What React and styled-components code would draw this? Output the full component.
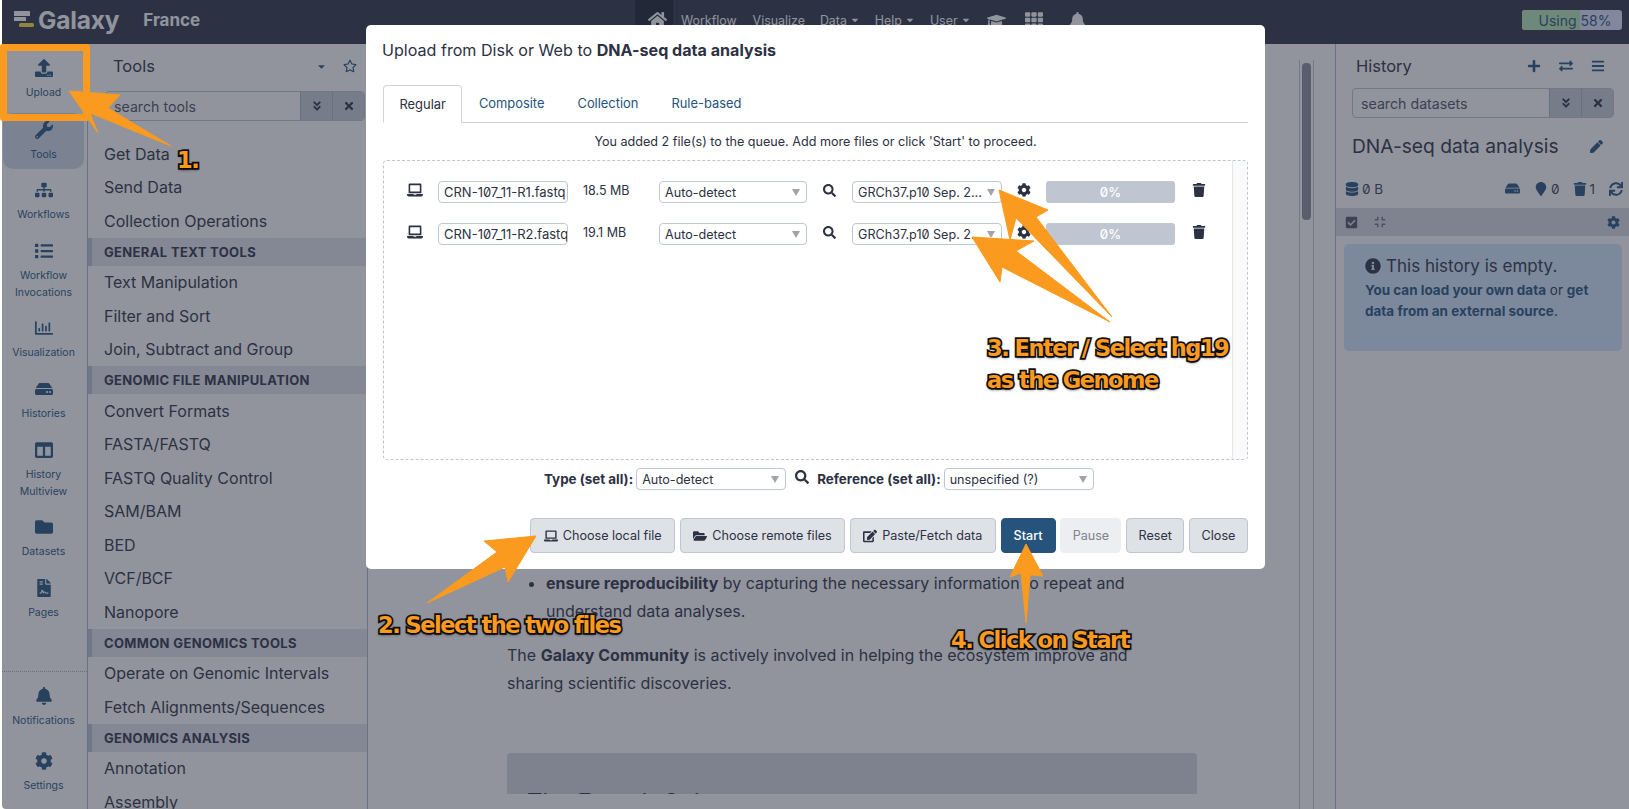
import React from 'react';
import styled, { createGlobalStyle } from 'styled-components';
import {
  FaUpload, FaWrench, FaSitemap, FaList, FaRegChartBar, FaHdd, FaColumns, FaFolder, FaFileContract,
  FaBell, FaCog, FaHome, FaGraduationCap, FaTh, FaRegStar, FaAngleDoubleDown, FaTimes, FaPlus,
  FaExchangeAlt, FaBars, FaPen, FaDatabase, FaMapMarker, FaTrash, FaSync, FaCheckSquare, FaCompress,
  FaInfoCircle, FaLaptop, FaSearch, FaFolderOpen, FaEdit, FaCaretDown,
} from 'react-icons/fa';

const Global = createGlobalStyle`
  html, body { margin: 0; padding: 0; background: #fff; overflow: hidden; }
  body { font-family: Inter, "Noto Sans", "Liberation Sans", sans-serif; font-feature-settings: "zero"; color: #2c3143; }
  * { box-sizing: border-box; }
`;

const Page = styled.div`
  position: relative; width: 1629px; height: 809px; overflow: hidden; background: #fff;
`;
const Shell = styled.div`
  margin-left: 2px; width: 1627px; height: 809px; display: flex; flex-direction: column;
  border-bottom-left-radius: 4px; overflow: hidden; background: #fff; position: relative;
`;

/* ---------- navbar ---------- */
const Navbar = styled.header`
  flex: 0 0 44px; background: #2c3143; display: flex; align-items: stretch; color: #fff; padding-left: 12px;
`;
const Brand = styled.div`display: flex; align-items: flex-start; width: 621px; padding-top: 7px;`;
const LogoMark = styled.svg`width: 21px; height: 20px; margin: 3px 3px 0 0;`;
const BrandName = styled.span`font: 700 24.5px/26px Inter, sans-serif; color: #fff; letter-spacing: -0.2px;`;
const BrandSub = styled.span`font: 700 17px/26px Inter, sans-serif; color: #fff; margin-left: 24px;`;
const HomeTab = styled.div`
  width: 38px; background: #1a1e2d; display: flex; align-items: center; justify-content: center; font-size: 19px; color: #fff; padding: 0 0 6px 6px;
`;
const NavLink = styled.span`
  display: flex; align-items: center; font-size: 12.4px; color: #fff; margin-left: ${p => p.$ml || 16}px; gap: 3px; padding-bottom: 4px;
`;
const NavIcon = styled.span`
  display: flex; align-items: center; font-size: ${p => p.$size || 18}px; color: #fff; margin-left: ${p => p.$ml || 16}px; padding-bottom: 4px;
`;
const Quota = styled.div`
  position: relative; margin: 10px 7px 0 auto; width: 100px; height: 20px; border-radius: 3px; background: #dfe3ff; overflow: hidden;
  display: flex; align-items: center; justify-content: center; font-size: 14px; color: #25537b; padding-left: 6px;
`;
const QuotaFill = styled.div`position: absolute; left: 0; top: 0; bottom: 0; background: #b7e8b6;`;
const QuotaText = styled.span`position: relative;`;

/* ---------- main ---------- */
const Main = styled.div`flex: 1; display: flex; min-height: 0;`;

const Activity = styled.nav`
  flex: 0 0 86px; border-right: 1px solid #b4b8c4; display: flex; flex-direction: column; align-items: stretch; padding-bottom: 11px;
`;
const ActivityItem = styled.div`
  height: ${p => p.$h || 54}px; flex: none; margin: ${p => p.$mt ?? 7}px 3px 0 1px; border-radius: 10px; background: ${p => p.$active ? '#d1d9e9' : 'transparent'};
  display: flex; flex-direction: column; align-items: center; color: #25537b; padding-top: 8px;
  svg { font-size: 18px; flex: none; }
`;
const ActivityLabel = styled.span`
  font-size: 10.5px; line-height: 16.5px; text-align: center; margin-top: 8px; color: #25537b;
`;
const ActivitySpacer = styled.div`flex: 1;`;
const DottedRule = styled.div`border-top: 1px dotted #aeb2bb;`;

const ToolPanel = styled.aside`
  flex: 0 0 280px; display: flex; flex-direction: column; border-right: 1px solid #b4b8c4; overflow: hidden;
`;
const PanelHead = styled.div`
  height: 44px; display: flex; align-items: center; padding: 0 ${p => p.$pr || 10}px 0 ${p => p.$pl || 25}px; font-size: 16.5px; flex: none;
`;
const PanelTitle = styled.span`flex: 1;`;
const HeadIcon = styled.span`
  display: flex; color: #25537b; font-size: ${p => p.$size || 14}px; margin-left: ${p => p.$ml || 18}px;
`;
const SearchGroup = styled.div`
  flex: none; display: flex; height: 30px; margin: ${p => p.$m}; border: 1px solid #bfc5d1; border-radius: 4px; overflow: hidden;
`;
const SearchText = styled.div`
  flex: 1; display: flex; align-items: center; font-size: 14.2px; padding-left: 8px; color: #4c5163;
`;
const SearchButton = styled.div`
  width: 32px; display: flex; align-items: center; justify-content: center; background: #c8cdd9; border-left: 1px solid #aeb3c1; font-size: 12px; color: #2c3143;
`;
const ToolList = styled.div`flex: 1; padding-top: 16px;`;
const ToolRow = styled.div`
  height: 33.5px; display: flex; align-items: center; padding-left: 16px; font-size: 16px; color: #2c3143;
`;
const ToolSection = styled.div`
  height: 28px; display: flex; align-items: center; padding-left: 12px; border-left: 4px solid #b8c2d8; background: #e3e4ec;
  font-weight: 700; font-size: 13px; color: #2c3143; letter-spacing: 0.35px; text-transform: uppercase;
`;

const Center = styled.main`
  flex: 1; min-width: 0; display: flex; align-items: flex-start; border-right: 1px solid #b4b8c4;
`;
const Article = styled.div`
  flex: 1; height: 750px; padding: 525px 0 0 139px; font-size: 16px; line-height: 28px; overflow: hidden; color: #2c3143;
`;
const ArticleList = styled.ul`margin: 0 0 16px; padding: 0 0 0 39px; width: 660px;`;
const ArticlePara = styled.p`margin: 0; width: 660px;`;
const FrenchBox = styled.div`
  margin-top: 56px; width: 690px; height: 80px; border-radius: 4px 4px 0 0; background: #d8dae0; padding: 35px 20px 0; font-size: 24px; line-height: 30px; color: #2c3143;
`;
const ScrollTrack = styled.div`
  flex: 0 0 15px; margin: 16px 21px 0 0; border-left: 1px solid #c6c8d0; border-right: 1px solid #c6c8d0; padding: 3px 2px; height: 749px;
`;
const ScrollThumb = styled.div`height: 157px; background: #5a5d6c; border-radius: 4px; opacity: .7; width: 9px;`;

const History = styled.aside`flex: 0 0 293px; display: flex; flex-direction: column; min-width: 0;`;
const HistoryTitleRow = styled.div`
  display: flex; align-items: center; justify-content: space-between; padding: 4px 26px 0 16px; height: 52px; font-size: 19.2px; flex: none; white-space: nowrap;
`;
const StatRow = styled.div`
  display: flex; align-items: center; padding: 0 6px 0 9px; height: 31px; margin-top: 3px; font-size: 13.5px; color: #3a3f55; flex: none;
`;
const Stat = styled.span`display: flex; align-items: center; gap: 3px; margin-left: ${p => p.$ml || 0}px; svg { font-size: ${p => p.$size || 14}px; color: #25537b; }`;
const Grow = styled.div`flex: 1;`;
const SelectBar = styled.div`
  height: 28px; background: #dadbe1; display: flex; align-items: center; padding: 0 9px; color: #25537b; margin-top: 4px; flex: none;
`;
const BarIcon = styled.span`display: flex; font-size: ${p => p.$size || 13}px; color: ${p => p.$c || '#25537b'}; margin-left: ${p => p.$ml || 0}px;`;
const EmptyAlert = styled.div`
  margin: 8px 7px 0 8px; height: 107px; border-radius: 5px; background: #d4e8ff; padding: 10px 21px; color: #2c3143; flex: none;
`;
const AlertHead = styled.div`display: flex; align-items: center; gap: 5px; font-size: 17px; line-height: 24px; svg { font-size: 16px; }`;
const AlertText = styled.div`font-size: 13.5px; line-height: 21px; margin-top: 2px; b { color: #25537b; font-weight: 700; }`;

/* ---------- backdrop & modal ---------- */
const Backdrop = styled.div`position: absolute; inset: 0 0 0 2px; background: rgba(44, 49, 67, .52); border-bottom-left-radius: 4px;`;
const Modal = styled.section`
  position: absolute; left: 366px; top: 25px; width: 899px; height: 544px; background: #fff; border-radius: 5px; padding: 0 17px; display: flex; flex-direction: column;
`;
const ModalTitle = styled.h5`margin: 0 0 0 -1px; height: 60px; padding: 16px 0 0; font: 400 16.1px/19px Inter, sans-serif; flex: none; b { font-weight: 700; }`;
const Tabs = styled.div`display: flex; height: 38px; border-bottom: 1px solid #cfd3da; flex: none;`;
const Tab = styled.div`
  padding: 0 16.5px; font-size: 12.9px; display: flex; align-items: center; color: ${p => p.$active ? '#2c3143' : '#25537b'};
  ${p => p.$active ? 'border: 1px solid #cfd3da; border-bottom: 1px solid #fff; height: 38px; background: #fff; border-radius: 4px 4px 0 0; padding: 0 15.5px;' : ''}
`;
const QueueInfo = styled.div`text-align: center; font-size: 12.6px; line-height: 37px; height: 37px; flex: none;`;
const DropBox = styled.div`
  height: 300px; border: 1px dashed #bfc5d1; border-radius: 4px; padding: 20px 0 0 0; display: flex; flex: none; overflow: hidden;
`;
const Rows = styled.div`flex: 1; display: flex; flex-direction: column; gap: 20px;`;
const ScrollGutter = styled.div`flex: 0 0 15px; border-left: 1px solid #e5e6ea; background: #fafafa; margin-top: -20px;`;
const FileRow = styled.div`display: flex; align-items: center; height: 22px; padding-left: 7px;`;
const RowIcon = styled.span`display: flex; justify-content: center; font-size: ${p => p.$size || 15}px; color: #2c3143; width: ${p => p.$w}px; margin-top: -4px; flex: none;`;
const NameField = styled.div`
  width: 130px; height: 22px; border: 1px solid #bfc5d1; border-radius: 4px; font-size: 13px; line-height: 20px; padding-left: 5px; overflow: hidden; white-space: nowrap; flex: none;
`;
const SizeText = styled.span`width: 91px; font-size: 12.5px; padding-left: 15px; margin-top: -3px; white-space: nowrap; flex: none;`;
const Select = styled.div`
  width: ${p => p.$w}px; height: 22px; border: 1px solid #bfc5d1; border-radius: 4px; font-size: 12.6px; display: flex; align-items: center; padding: 0 6px 0 5px; background: #fff; flex: none; white-space: nowrap; overflow: hidden;
`;
const SelectValue = styled.span`flex: 1; overflow: hidden;`;
const Caret = styled.span`width: 0; height: 0; border-left: 4.5px solid transparent; border-right: 4.5px solid transparent; border-top: 7px solid #a1a3a8; flex: none; margin-left: 2px;`;
const Progress = styled.div`
  width: 129px; height: 22px; border-radius: 3px; background: #bfc5d1; color: #fff; font-size: 13px; font-weight: 500; display: flex; align-items: center; justify-content: center; flex: none;
`;
const SetAll = styled.div`display: flex; align-items: center; height: 22px; margin-top: 8px; padding-left: 161px; font-size: 12.6px; flex: none;`;
const SetLabel = styled.b`font-weight: 700; font-size: 13.4px; margin-right: 3px; white-space: nowrap;`;
const Footer = styled.div`display: flex; justify-content: flex-end; gap: 4.8px; margin-top: 28px; flex: none;`;
const Btn = styled.div`
  height: 35px; display: flex; align-items: center; justify-content: center; gap: 5px; width: ${p => p.$w}px; font-size: 12.6px; border-radius: 4px;
  background: ${p => p.$primary ? '#25537b' : p.$off ? '#eceef1' : '#dee2e7'}; color: ${p => p.$primary ? '#fff' : p.$off ? '#7f8390' : '#2c3143'};
  border: 1px solid ${p => p.$primary ? '#25537b' : p.$off ? '#eceef1' : '#bfc5d1'};
  font-weight: ${p => p.$primary ? 500 : 400};
  svg { font-size: 14px; }
`;

/* ---------- annotations ---------- */
const Annotations = styled.svg`position: absolute; left: 0; top: 0; width: 1629px; height: 809px; pointer-events: none;`;
const UploadFrame = styled.div`
  position: absolute; left: 0; top: 44px; width: 90px; height: 77px; border: 7px solid #fa9a1e; border-radius: 3px;
`;
const Callout = styled.div`
  position: absolute; left: ${p => p.$x}px; top: ${p => p.$y}px; font: 700 22.5px/32px "DejaVu Sans", "Liberation Sans", sans-serif; color: #fa9a1e;
  white-space: pre; letter-spacing: -1.5px;
  -webkit-text-stroke: 3.5px #111;
  paint-order: stroke fill;
  text-shadow: 0 2px 3px rgba(0,0,0,.6);
`;

const Logo = () => (
  <LogoMark viewBox="0 0 21 20">
    <rect x="0" y="1" width="16" height="5" rx="0.5" fill="#fff" />
    <rect x="0" y="7" width="12" height="4" rx="0.5" fill="#fff" />
    <rect x="5" y="13" width="15" height="4" rx="1.5" fill="#ffdf40" />
  </LogoMark>
);

const activityTop = [
  { icon: <FaUpload />, label: 'Upload' },
  { icon: <FaWrench />, label: 'Tools', active: true, mt: 8, h: 56 },
  { icon: <FaSitemap />, label: 'Workflows', mt: 4 },
  { icon: <FaList />, label: 'Workflow\nInvocations', h: 70 },
  { icon: <FaRegChartBar />, label: 'Visualization' },
  { icon: <FaHdd />, label: 'Histories' },
  { icon: <FaColumns />, label: 'History\nMultiview', h: 70 },
  { icon: <FaFolder />, label: 'Datasets' },
  { icon: <FaFileContract />, label: 'Pages' },
];
const activityBottom = [
  { icon: <FaBell />, label: 'Notifications', mt: 7 },
  { icon: <FaCog />, label: 'Settings', mt: 11 },
];

const tools = [
  ['r', 'Get Data'], ['r', 'Send Data'], ['r', 'Collection Operations'],
  ['s', 'General Text Tools'], ['r', 'Text Manipulation'], ['r', 'Filter and Sort'], ['r', 'Join, Subtract and Group'],
  ['s', 'Genomic File Manipulation'], ['r', 'Convert Formats'], ['r', 'FASTA/FASTQ'], ['r', 'FASTQ Quality Control'], ['r', 'SAM/BAM'], ['r', 'BED'], ['r', 'VCF/BCF'], ['r', 'Nanopore'],
  ['s', 'Common Genomics Tools'], ['r', 'Operate on Genomic Intervals'], ['r', 'Fetch Alignments/Sequences'],
  ['s', 'Genomics Analysis'], ['r', 'Annotation'], ['r', 'Assembly'],
];

const files = [
  { name: 'CRN-107_11-R1.fastq', size: '18.5 MB' },
  { name: 'CRN-107_11-R2.fastq', size: '19.1 MB' },
];

const arrows = [
  '69,91 120,95 108,108 171,146 90,113 98,133',
  '536,536 484,541 497,552 427,603 505,567 508,582',
  '1026,544 1010,577 1021,573 1026,623 1030,575 1043,576',
  '999,190 1048,210 1036,217 1112,317 1016,218 1010,240',
  '972,237 1034,241 1016,251 1110,322 1002,267 1000,282',
];

export default function App() {
  return (
    <Page>
      <Global />
      <Shell>
        <Navbar>
          <Brand>
            <Logo />
            <BrandName>Galaxy</BrandName>
            <BrandSub>France</BrandSub>
          </Brand>
          <HomeTab><FaHome /></HomeTab>
          <NavLink $ml={8}>Workflow</NavLink>
          <NavLink>Visualize</NavLink>
          <NavLink $ml={15}>Data <FaCaretDown size={10} /></NavLink>
          <NavLink $ml={15}>Help <FaCaretDown size={10} /></NavLink>
          <NavLink $ml={15}>User <FaCaretDown size={10} /></NavLink>
          <NavIcon $size={19} $ml={16}><FaGraduationCap /></NavIcon>
          <NavIcon $size={18} $ml={19}><FaTh /></NavIcon>
          <NavIcon $size={17} $ml={26}><FaBell /></NavIcon>
          <Quota>
            <QuotaFill style={{ width: '58%' }} />
            <QuotaText>Using 58%</QuotaText>
          </Quota>
        </Navbar>
        <Main>
          <Activity>
            {activityTop.map(a => (
              <ActivityItem key={a.label} $h={a.h} $mt={a.mt} $active={a.active}>
                {a.icon}
                <ActivityLabel>{a.label.split('\n').map(l => <div key={l}>{l}</div>)}</ActivityLabel>
              </ActivityItem>
            ))}
            <ActivitySpacer />
            <DottedRule />
            {activityBottom.map(a => (
              <ActivityItem key={a.label} $mt={a.mt}>
                {a.icon}
                <ActivityLabel>{a.label}</ActivityLabel>
              </ActivityItem>
            ))}
          </Activity>
          <ToolPanel>
            <PanelHead>
              <PanelTitle>Tools</PanelTitle>
              <HeadIcon $size={11}><FaCaretDown /></HeadIcon>
              <HeadIcon $size={14} $ml={16}><FaRegStar /></HeadIcon>
            </PanelHead>
            <SearchGroup $m="3px 2px 0 17px">
              <SearchText>search tools</SearchText>
              <SearchButton><FaAngleDoubleDown /></SearchButton>
              <SearchButton><FaTimes /></SearchButton>
            </SearchGroup>
            <ToolList>
              {tools.map(([k, t]) => k === 'r' ? <ToolRow key={t}>{t}</ToolRow> : <ToolSection key={t}>{t}</ToolSection>)}
            </ToolList>
          </ToolPanel>
          <Center>
            <Article>
              <ArticleList>
                <li><b>ensure reproducibility</b> by capturing the necessary information to repeat and understand data analyses.</li>
              </ArticleList>
              <ArticlePara>The <b>Galaxy Community</b> is actively involved in helping the ecosystem improve and sharing scientific discoveries.</ArticlePara>
              <FrenchBox>The French Galaxy</FrenchBox>
            </Article>
            <ScrollTrack><ScrollThumb /></ScrollTrack>
          </Center>
          <History>
            <PanelHead $pl={20} $pr={24}>
              <PanelTitle>History</PanelTitle>
              <HeadIcon $size={14}><FaPlus /></HeadIcon>
              <HeadIcon $size={14}><FaExchangeAlt /></HeadIcon>
              <HeadIcon $size={14}><FaBars /></HeadIcon>
            </PanelHead>
            <SearchGroup $m="0 15px 0 16px">
              <SearchText>search datasets</SearchText>
              <SearchButton><FaAngleDoubleDown /></SearchButton>
              <SearchButton><FaTimes /></SearchButton>
            </SearchGroup>
            <HistoryTitleRow>
              <span>DNA-seq data analysis</span>
              <HeadIcon $size={13}><FaPen /></HeadIcon>
            </HistoryTitleRow>
            <StatRow>
              <Stat><FaDatabase />0 B</Stat>
              <Grow />
              <Stat $size={15}><FaHdd /></Stat>
              <Stat $ml={14}><FaMapMarker />0</Stat>
              <Stat $ml={13}><FaTrash />1</Stat>
              <Stat $ml={14}><FaSync /></Stat>
            </StatRow>
            <SelectBar>
              <BarIcon $c="#4f5468" $size={13}><FaCheckSquare /></BarIcon>
              <BarIcon $c="#6f7486" $ml={16} $size={12}><FaCompress /></BarIcon>
              <Grow />
              <BarIcon><FaCog /></BarIcon>
            </SelectBar>
            <EmptyAlert>
              <AlertHead><FaInfoCircle />This history is empty.</AlertHead>
              <AlertText><b>You can load your own data</b> or <b>get data from an external source</b>.</AlertText>
            </EmptyAlert>
          </History>
        </Main>
      </Shell>
      <Backdrop />
      <Modal>
        <ModalTitle>Upload from Disk or Web to <b>DNA-seq data analysis</b></ModalTitle>
        <Tabs>
          <Tab $active>Regular</Tab>
          <Tab>Composite</Tab>
          <Tab>Collection</Tab>
          <Tab>Rule-based</Tab>
        </Tabs>
        <QueueInfo>You added 2 file(s) to the queue. Add more files or click 'Start' to proceed.</QueueInfo>
        <DropBox>
          <Rows>
            {files.map(f => (
              <FileRow key={f.name}>
                <RowIcon $w={47} $size={16}><FaLaptop /></RowIcon>
                <NameField>{f.name}</NameField>
                <SizeText>{f.size}</SizeText>
                <Select $w={148}><SelectValue>Auto-detect</SelectValue><Caret /></Select>
                <RowIcon $w={45} $size={13}><FaSearch /></RowIcon>
                <Select $w={150}><SelectValue>GRCh37.p10 Sep. 2...</SelectValue><Caret /></Select>
                <RowIcon $w={44} $size={14}><FaCog /></RowIcon>
                <Progress>0%</Progress>
                <RowIcon $w={48} $size={14}><FaTrash /></RowIcon>
              </FileRow>
            ))}
          </Rows>
          <ScrollGutter />
        </DropBox>
        <SetAll>
          <SetLabel>Type (set all):</SetLabel>
          <Select $w={150}><SelectValue>Auto-detect</SelectValue><Caret /></Select>
          <RowIcon $w={31} $size={14}><FaSearch /></RowIcon>
          <SetLabel>Reference (set all):</SetLabel>
          <Select $w={150}><SelectValue>unspecified (?)</SelectValue><Caret /></Select>
        </SetAll>
        <Footer>
          <Btn $w={145}><FaLaptop />Choose local file</Btn>
          <Btn $w={165}><FaFolderOpen />Choose remote files</Btn>
          <Btn $w={146}><FaEdit />Paste/Fetch data</Btn>
          <Btn $w={55} $primary>Start</Btn>
          <Btn $w={61} $off>Pause</Btn>
          <Btn $w={58}>Reset</Btn>
          <Btn $w={59}>Close</Btn>
        </Footer>
      </Modal>
      <UploadFrame />
      <Annotations viewBox="0 0 1629 809">
        {arrows.map(p => <polygon key={p} points={p} fill="#fa9a1e" stroke="#fa9a1e" strokeLinejoin="round" />)}
      </Annotations>
      <Callout $x={177} $y={144}>1.</Callout>
      <Callout $x={378} $y={609}>2. Select the two files</Callout>
      <Callout $x={987} $y={332}>{'3. Enter / Select hg19\nas the Genome'}</Callout>
      <Callout $x={951} $y={624}>4. Click on Start</Callout>
    </Page>
  );
}
